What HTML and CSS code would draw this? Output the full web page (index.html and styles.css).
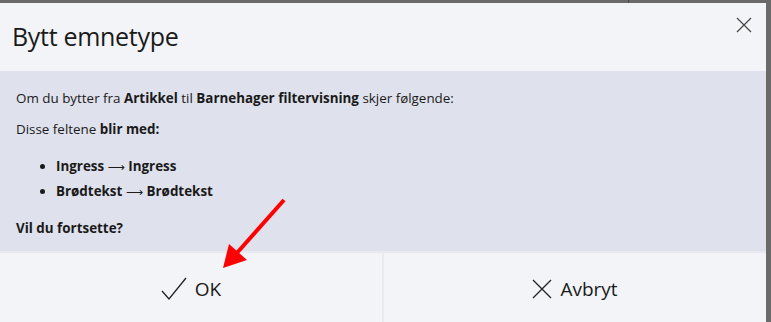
FILE: index.html
```html
<!DOCTYPE html>
<html>
<head>
	<title>Bytt emnetype</title>
	<link rel="stylesheet" href="styles.css">
</head>
<body>
	<!-- Page behind the dialog -->
	<div class="backdrop">
		<div class="backdrop-line"></div>
	</div>

	<!-- Dialog -->
	<div class="modal">
		<div class="modal-header">
			<h1>Bytt emnetype</h1>
			<button class="close-btn" aria-label="Lukk">
				<svg width="16" height="16" viewBox="0 0 16 16"><path d="M1 1L15 15M15 1L1 15" stroke="#444" stroke-width="1.2" fill="none"/></svg>
			</button>
		</div>

		<div class="modal-body">
			<p>Om du bytter fra <b>Artikkel</b> til <b>Barnehager filtervisning</b> skjer følgende:</p>
			<p>Disse feltene <b>blir med:</b></p>
			<ul>
				<li><b>Ingress <span class="arr">&#x27F6;</span> Ingress</b></li>
				<li><b>Brødtekst <span class="arr">&#x27F6;</span> Brødtekst</b></li>
			</ul>
			<p><b>Vil du fortsette?</b></p>
		</div>

		<div class="modal-footer">
			<button class="footer-btn">
				<svg width="26" height="24" viewBox="0 0 26 24"><path d="M1 14L8 22L25 1" stroke="#222" stroke-width="1.3" fill="none"/></svg>
				OK
			</button>
			<button class="footer-btn">
				<svg width="20" height="20" viewBox="0 0 20 20"><path d="M1 1L19 19M19 1L1 19" stroke="#222" stroke-width="1.3" fill="none"/></svg>
				Avbryt
			</button>
		</div>
	</div>

	<!-- Annotation arrow -->
	<svg class="arrow" width="80" height="80" viewBox="0 0 80 80">
		<path d="M64 4L16 58" stroke="#f00" stroke-width="4" fill="none"/>
		<path d="M3 72L9 48L27 64Z" fill="#f00"/>
	</svg>
</body>
</html>
```

FILE: styles.css
```css
/* Page reset */
body {
	margin: 0;
	background-color: #6a6a6a;
	font-family: "Open Sans", sans-serif;
	color: #1a1a1a;
	height: 322px;
	overflow: hidden;
	position: relative;
}

/* Dark strip of the page behind */
.backdrop {
	height: 3px;
	position: relative;
}

.backdrop-line {
	position: absolute;
	left: 628px;
	top: 0;
	width: 1px;
	height: 3px;
	background-color: #4a4a4a;
}

/* Dialog box */
.modal {
	width: 766px;
	background-color: #f3f4f8;
}

/* Dialog header */
.modal-header {
	height: 68px;
	display: flex;
	align-items: center;
	justify-content: space-between;
	padding: 0 14px 0 12px;
	box-sizing: border-box;
}

.modal-header h1 {
	margin: 0 0 3px 0;
	font-size: 25px;
	font-weight: 400;
	letter-spacing: -0.3px;
}

.close-btn {
	border: none;
	background: none;
	padding: 0;
	align-self: flex-start;
	margin-top: 14px;
}

/* Dialog body */
.modal-body {
	background-color: #dfe1ec;
	padding: 18px 16px 12px 16px;
	font-size: 13.4px;
	height: 180px;
	box-sizing: border-box;
}

.modal-body p {
	margin: 0 0 13px 0;
}

.modal-body ul {
	margin: 16px 0 15px 0;
	padding-left: 40px;
}

.modal-body li {
	line-height: 24px;
}

/* Long arrow between field names */
.arr {
	font-family: "DejaVu Sans", sans-serif;
	font-weight: 400;
	font-size: 12px;
}

/* Footer buttons */
.modal-footer {
	display: flex;
	gap: 2px;
	border-top: 2px solid #e8eaf0;
	background-color: #e8eaf0;
	height: 72px;
}

.footer-btn {
	flex: 1;
	border: none;
	background-color: #f3f4f8;
	font-family: "Open Sans", sans-serif;
	font-size: 19px;
	color: #1a1a1a;
	display: flex;
	align-items: center;
	justify-content: center;
	gap: 8px;
	padding: 0;
}

/* Red annotation arrow */
.arrow {
	position: absolute;
	left: 220px;
	top: 196px;
}
```
